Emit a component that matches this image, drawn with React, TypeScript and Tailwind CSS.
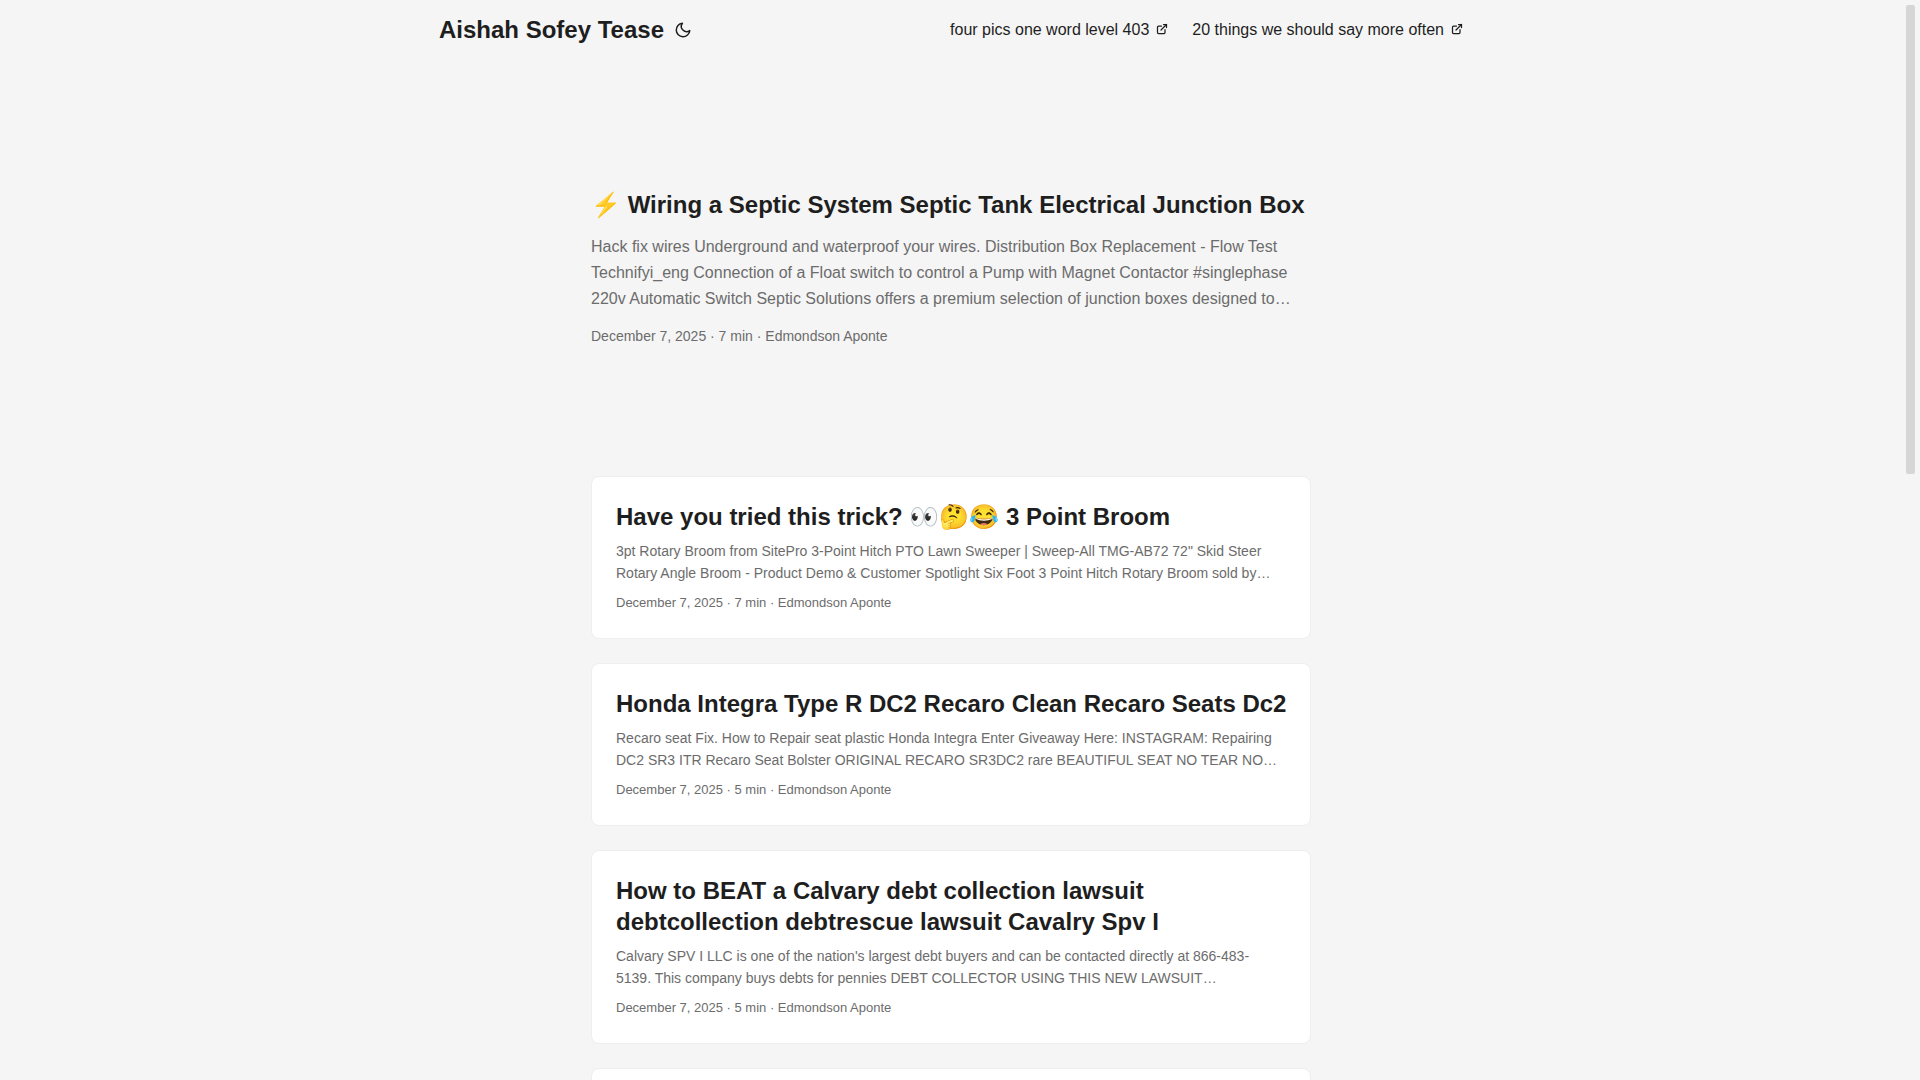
import React from "react";

type Post = { title: string; summary: string; meta: string };

const menu = ["four pics one word level 403", "20 things we should say more often"];

const featured: Post = {
  title: "⚡ Wiring a Septic System Septic Tank Electrical Junction Box",
  summary:
    "Hack fix wires Underground and waterproof your wires. Distribution Box Replacement - Flow Test\nTechnifyi_eng Connection of a Float switch to control a Pump with Magnet Contactor #singlephase\n220v Automatic Switch Septic Solutions offers a premium selection of junction boxes designed to…",
  meta: "December 7, 2025 · 7 min · Edmondson Aponte",
};

const posts: Post[] = [
  {
    title: "Have you tried this trick? 👀🤔😂 3 Point Broom",
    summary:
      '3pt Rotary Broom from SitePro 3-Point Hitch PTO Lawn Sweeper | Sweep-All TMG-AB72 72" Skid Steer\nRotary Angle Broom - Product Demo & Customer Spotlight Six Foot 3 Point Hitch Rotary Broom sold by…',
    meta: "December 7, 2025 · 7 min · Edmondson Aponte",
  },
  {
    title: "Honda Integra Type R DC2 Recaro Clean Recaro Seats Dc2",
    summary:
      "Recaro seat Fix. How to Repair seat plastic Honda Integra Enter Giveaway Here: INSTAGRAM: Repairing\nDC2 SR3 ITR Recaro Seat Bolster ORIGINAL RECARO SR3DC2 rare BEAUTIFUL SEAT NO TEAR NO…",
    meta: "December 7, 2025 · 5 min · Edmondson Aponte",
  },
  {
    title: "How to BEAT a Calvary debt collection lawsuit debtcollection debtrescue lawsuit Cavalry Spv I",
    summary:
      "Calvary SPV I LLC is one of the nation's largest debt buyers and can be contacted directly at 866-483-\n5139. This company buys debts for pennies DEBT COLLECTOR USING THIS NEW LAWSUIT…",
    meta: "December 7, 2025 · 5 min · Edmondson Aponte",
  },
];

function ExternalIcon() {
  return (
    <svg
      viewBox="0 0 24 24"
      className="mb-0.5 h-3 w-3"
      fill="none"
      stroke="currentColor"
      strokeWidth="2.5"
      strokeLinecap="round"
      strokeLinejoin="round"
      aria-hidden="true"
    >
      <path d="M18 13v6a2 2 0 0 1-2 2H5a2 2 0 0 1-2-2V8a2 2 0 0 1 2-2h6" />
      <path d="M15 3h6v6" />
      <path d="M10 14L21 3" />
    </svg>
  );
}

function PostCard({ post }: { post: Post }) {
  return (
    <article className="mb-6 rounded-lg border border-[#eeeeee] bg-white py-6 pr-5 pl-6">
      <h2 className="text-2xl leading-[31px] font-bold">
        <a href="#">{post.title}</a>
      </h2>
      <p className="my-2 text-sm leading-[22px] whitespace-pre-line text-[#6c6c6c]">{post.summary}</p>
      <footer className="text-[13px] leading-[22px] text-[#6c6c6c]">{post.meta}</footer>
    </article>
  );
}

export default function App() {
  return (
    <div className="h-screen overflow-y-auto bg-[#f5f5f5] pr-[18px] font-['Liberation_Sans',Arial,sans-serif] text-[#1e1e1e] [text-rendering:optimizeLegibility]">
      <header>
        <nav className="mx-auto flex max-w-[1072px] flex-wrap justify-between px-6 leading-[60px]">
          <div className="flex items-center gap-[7px]">
            <a href="#" className="text-2xl leading-[60px] font-bold">
              Aishah Sofey Tease
            </a>
            <button type="button" aria-label="Toggle theme" className="p-0">
              <svg
                viewBox="0 0 24 24"
                className="h-[18px] w-6"
                fill="none"
                stroke="currentColor"
                strokeWidth="2"
                strokeLinecap="round"
                strokeLinejoin="round"
                aria-hidden="true"
              >
                <path d="M21 12.79A9 9 0 1 1 11.21 3 7 7 0 0 0 21 12.79z" />
              </svg>
            </button>
          </div>
          <ul className="flex gap-6 text-base leading-[60px]">
            {menu.map((label) => (
              <li key={label}>
                <a href="#" className="flex items-center gap-[7px] leading-[60px]">
                  <span>{label}</span>
                  <ExternalIcon />
                </a>
              </li>
            ))}
          </ul>
        </nav>
      </header>

      <main className="mx-auto max-w-[768px] p-6">
        <article className="mt-6 mb-12 flex min-h-80 flex-col justify-center pb-0.5">
          <h1 className="text-2xl leading-[31px] font-bold">
            <a href="#">{featured.title}</a>
          </h1>
          <p className="my-3.5 text-base leading-[26px] whitespace-pre-line text-[#6c6c6c]">{featured.summary}</p>
          <footer className="text-sm leading-5 text-[#6c6c6c]">{featured.meta}</footer>
        </article>

        {posts.map((post) => (
          <PostCard key={post.title} post={post} />
        ))}
        <article className="h-40 rounded-lg border border-[#eeeeee] bg-white" />
      </main>

      <div className="fixed top-[5px] right-[5px] h-[469px] w-[9px] rounded-xs bg-[#d6d6d6]" />
    </div>
  );
}
